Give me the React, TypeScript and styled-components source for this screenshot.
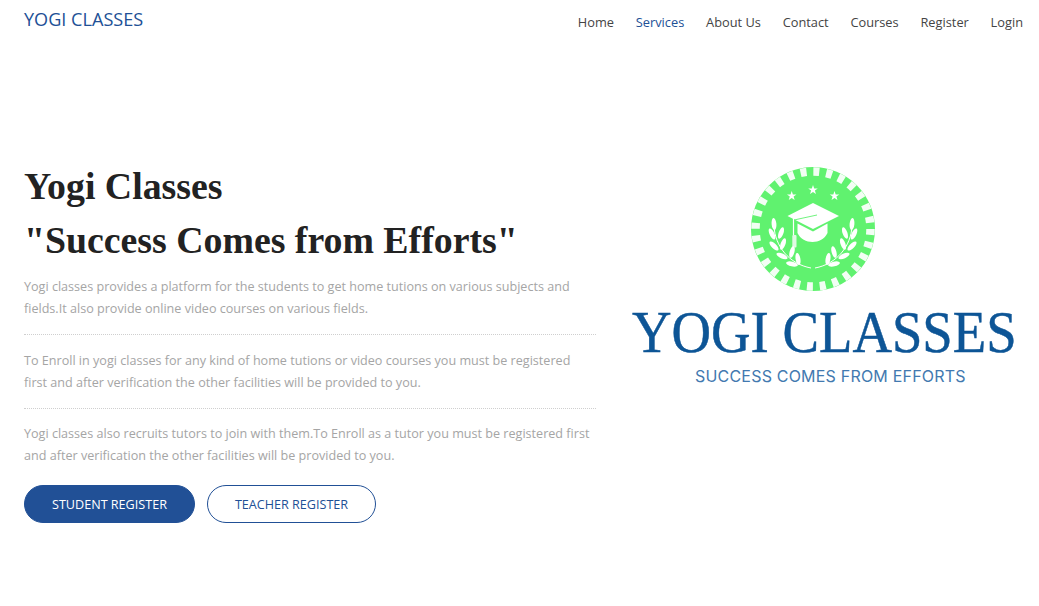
import React from "react";
import styled, { createGlobalStyle } from "styled-components";

const Global = createGlobalStyle`
  html, body { margin: 0; padding: 0; background: #fff; }
  body { font-family: "Open Sans", "Liberation Sans", sans-serif; }
`;
const Page = styled.div`
  width: 1039px;
  height: 606px;
  overflow: hidden;
  display: flex;
  flex-direction: column;
`;
const Header = styled.header`
  display: flex;
  justify-content: space-between;
  align-items: flex-start;
  padding: 7px 16px 0 24px;
  height: 38px;
`;
const Brand = styled.a`
  font-size: 18.1px;
  line-height: 24px;
  color: #215096;
  text-transform: uppercase;
`;
const Nav = styled.nav`
  display: flex;
  gap: 21.8px;
  padding-top: 6px;
`;
const NavLink = styled.a<{ $active?: boolean }>`
  font-size: 12.8px;
  line-height: 18px;
  color: ${(p) => (p.$active ? "#215096" : "#444")};
`;
const Main = styled.main`
  display: grid;
  grid-template-columns: 572px 1fr;
  column-gap: 36px;
  padding: 114px 25px 0 24px;
`;
const Left = styled.section`
  display: flex;
  flex-direction: column;
`;
const Title = styled.h1`
  margin: 0 0 9px;
  font-family: "Liberation Serif", serif;
  font-weight: 700;
  font-size: 37.8px;
  line-height: 54px;
  color: #222;
`;
const Para = styled.p`
  margin: 0;
  font-size: 12.6px;
  line-height: 22px;
  color: #a5a5a5;
`;
const Rule = styled.hr<{ $above: number; $below: number }>`
  margin: ${(p) => p.$above}px 0 ${(p) => p.$below}px;
  border: 0;
  border-top: 1px dotted #cfcfcf;
`;
const Actions = styled.div`
  display: flex;
  gap: 12px;
  margin-top: 18px;
`;
const Pill = styled.a<{ $solid?: boolean }>`
  box-sizing: border-box;
  height: 38px;
  padding: 0 27px;
  border-radius: 19px;
  border: 1px solid #215096;
  display: flex;
  align-items: center;
  font-size: 12.6px;
  background: ${(p) => (p.$solid ? "#215096" : "#fff")};
  color: ${(p) => (p.$solid ? "#fff" : "#215096")};
  font-weight: ${(p) => (p.$solid ? 500 : 400)};
`;
const Right = styled.section`
  display: flex;
  flex-direction: column;
  align-items: flex-start;
  padding-top: 7px;
`;
const Emblem = styled.svg`
  width: 125px;
  height: 126px;
  margin-left: 119px;
  display: block;
`;
const LogoName = styled.div`
  font-family: "Liberation Serif", serif;
  font-size: 60px;
  line-height: 60px;
  color: #0d5596;
  -webkit-text-stroke: 0.5px #0d5596;
  white-space: nowrap;
  margin-top: 10px;
  transform: scaleX(0.912);
  transform-origin: left center;
`;
const LogoTag = styled.div`
  font-family: "Inter", sans-serif;
  font-size: 16px;
  line-height: 20px;
  letter-spacing: 0.2px;
  color: #4279b0;
  white-space: nowrap;
  margin: 4px 0 0 63px;
`;

const Leaf = ({ x, y, r }: { x: number; y: number; r: number }) => (
  <ellipse cx={x} cy={y} rx="2.4" ry="6" fill="#fff" transform={`rotate(${r} ${x} ${y})`} />
);
const Star = ({ x, y }: { x: number; y: number }) => (
  <polygon
    fill="#fff"
    transform={`translate(${x} ${y}) scale(5)`}
    points="0,-1 .24,-.31 .95,-.31 .38,.12 .59,.81 0,.4 -.59,.81 -.38,.12 -.95,-.31 -.24,-.31"
  />
);
const Laurel = () => (
  <g>
    <path d="M23 60C24 80 38 98 60 102" fill="none" stroke="#fff" strokeWidth="1" />
    <Leaf x={23} y={58} r={-5} />
    <Leaf x={21} y={68} r={-25} />
    <Leaf x={30} y={67} r={20} />
    <Leaf x={23} y={80} r={-45} />
    <Leaf x={32} y={78} r={20} />
    <Leaf x={31} y={90} r={-65} />
    <Leaf x={41} y={86} r={15} />
    <Leaf x={41} y={98} r={-78} />
    <Leaf x={47} y={93} r={-10} />
  </g>
);

const Logo = () => (
  <Emblem viewBox="0 0 125 126" role="img" aria-label="graduation cap emblem">
    <circle cx="62" cy="63" r="62" fill="#60f26f" />
    <circle cx="62" cy="63" r="57.5" fill="none" stroke="#fff" strokeWidth="8.5" strokeDasharray="6 6.9" opacity="0.92" />
    <Star x={40.7} y={30} />
    <Star x={62} y={24} />
    <Star x={83.5} y={30} />
    <path d="M62 37 88 50 62 63 36.5 50Z" fill="#fff" />
    <path d="M46.5 57.5 62 65.5 76.5 57.5V67C71 79 52 79 46.5 67Z" fill="#fff" />
    <path d="M42.5 52V69" stroke="#fff" strokeWidth="1.2" />
    <rect x="41.3" y="69" width="4.2" height="12.5" rx="1" fill="#e0fae3" />
    <path d="M43 54 66 49" stroke="#60f26f" strokeWidth="0.9" fill="none" />
    <Laurel />
    <g transform="translate(124 0) scale(-1 1)">
      <Laurel />
    </g>
  </Emblem>
);

export default function App() {
  return (
    <Page>
      <Global />
      <Header>
        <Brand>Yogi Classes</Brand>
        <Nav>
          <NavLink>Home</NavLink>
          <NavLink $active>Services</NavLink>
          <NavLink>About Us</NavLink>
          <NavLink>Contact</NavLink>
          <NavLink>Courses</NavLink>
          <NavLink>Register</NavLink>
          <NavLink>Login</NavLink>
        </Nav>
      </Header>
      <Main>
        <Left>
          <Title>
            Yogi Classes
            <br />
            "Success Comes from Efforts"
          </Title>
          <Para>
            Yogi classes provides a platform for the students to get home tutions on various subjects and fields.It also provide online video courses on various fields.
          </Para>
          <Rule $above={14} $below={15} />
          <Para>
            To Enroll in yogi classes for any kind of home tutions or video courses you must be registered first and after verification the other facilities will be provided to you.
          </Para>
          <Rule $above={14} $below={14} />
          <Para>
            Yogi classes also recruits tutors to join with them.To Enroll as a tutor you must be registered first and after verification the other facilities will be provided to you.
          </Para>
          <Actions>
            <Pill $solid>STUDENT REGISTER</Pill>
            <Pill>TEACHER REGISTER</Pill>
          </Actions>
        </Left>
        <Right>
          <Logo />
          <LogoName>YOGI CLASSES</LogoName>
          <LogoTag>SUCCESS COMES FROM EFFORTS</LogoTag>
        </Right>
      </Main>
    </Page>
  );
}
